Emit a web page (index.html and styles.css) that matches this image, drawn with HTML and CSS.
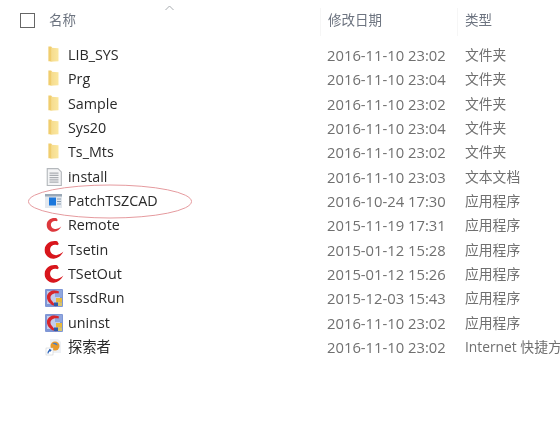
FILE: index.html
```html
<!DOCTYPE html>
<html lang="zh-CN">
<head>
    <meta charset="UTF-8">
    <meta name="viewport" content="width=device-width, initial-scale=1.0">
    <title>文件列表</title>
    <link rel="stylesheet" href="styles.css">
</head>
<body>
    <svg class="icon-defs" width="0" height="0">
        <defs>
            <linearGradient id="folderFill" x1="0" y1="0" x2="1" y2="0">
                <stop offset="0" stop-color="#f4d98a"/>
                <stop offset="1" stop-color="#fbe79f"/>
            </linearGradient>
            <symbol id="folder" viewBox="0 0 16 16">
                <path d="M3 .5h2.500l1 1.500v11.500h-3.500z" fill="#f0cd6e"/>
                <path d="M5.500 1.500l6.500 .5v11.500l-8 .5 1.500-1z" fill="url(#folderFill)"/>
            </symbol>
            <symbol id="textfile" viewBox="0 0 16 16">
                <path d="M2 .5h9.500l3 3v12h-12.500z" fill="#f4f5f6" stroke="#b4b8bc"/>
                <path d="M4 4.500h8M4 6.500h8M4 8.500h8M4 10.500h8M4 12.500h8" stroke="#a9adb2"/>
            </symbol>
            <symbol id="appfile" viewBox="0 0 18 16">
                <rect x="0" y="1" width="17" height="14" fill="#e3e8ee"/>
                <rect x="0" y="1" width="17" height="2.500" fill="#9aa8b6"/>
                <rect x="4" y="4.500" width="7" height="8" fill="#1c78dc"/>
                <path d="M12 6h4M12 8.500h4M12 11h4" stroke="#8ea0b2"/>
            </symbol>
            <symbol id="swirl" viewBox="0 0 18 18">
                <path d="M12 1C7-.5 .8 2.500 .3 8.500 0 13 4 17.500 9 17c3.500-.3 6.800-2.500 8.700-6.500-2.700 2.500-6 4-8.700 3-3-1-4.300-4-3.300-6.500 .8-2 2.800-3.500 6.300-2.500l1.500-1z" fill="#d8161c"/>
            </symbol>
            <symbol id="setup" viewBox="0 0 18 18">
                <rect x="0" y="0" width="18" height="18" rx="1" fill="#7f97d6"/>
                <rect x="2" y="2" width="13" height="13" fill="#c3cdec"/>
                <rect x="10" y="1" width="7" height="7" fill="#8fa6de"/>
                <path d="M14 2.500C9 0 3 2 2 7c-.6 3.500 1.500 6.500 5 9l4.500 1.500-4.500-5.500c-2-2-2-4.500-.5-6 1.500-1.500 4-2 7-1.500z" fill="#d8262c"/>
                <rect x="11" y="9" width="6" height="4.500" fill="#e8b93c"/>
                <rect x="9" y="13.500" width="4" height="3.500" fill="#2f5aa8"/>
                <rect x="13" y="13.500" width="4" height="3.500" fill="#d9c46a"/>
            </symbol>
            <symbol id="shortcut" viewBox="0 0 18 18">
                <path d="M5 1h8l3 3v11h-11z" fill="#eef1f5"/>
                <circle cx="10" cy="8" r="4.500" fill="#e89a2c"/>
                <path d="M7.500 5.500c2-1.500 5-.5 5 2-1.500-1-3.500-1-5-2z" fill="#3f7fd0"/>
                <rect x="1" y="10" width="7" height="7" fill="#fff" stroke="#c4c8cc" stroke-width=".5"/>
                <path d="M3 15.500c0-2 .8-3 2.500-3.200M4.200 11.200l1.800 1-1.400 1.500" fill="none" stroke="#2a62b8" stroke-width="1.100"/>
            </symbol>
        </defs>
    </svg>

    <div class="explorer">
        <div class="list-header">
            <div class="col-name">
                <span class="checkbox"></span>
                <span class="header-label">名称</span>
                <svg class="sort-caret" width="9" height="6" viewBox="0 0 9 6"><path d="M.5 5l4-4 4 4" fill="none" stroke="#a8acb0"/></svg>
            </div>
            <div class="col-date header-label">修改日期</div>
            <div class="col-type header-label">类型</div>
        </div>

        <div class="file-list">
            <div class="file-row">
                <div class="file-name"><svg class="file-icon"><use href="#folder"/></svg>LIB_SYS</div>
                <div class="col-date">2016-11-10 23:02</div>
                <div class="col-type">文件夹</div>
            </div>
            <div class="file-row">
                <div class="file-name"><svg class="file-icon"><use href="#folder"/></svg>Prg</div>
                <div class="col-date">2016-11-10 23:04</div>
                <div class="col-type">文件夹</div>
            </div>
            <div class="file-row">
                <div class="file-name"><svg class="file-icon"><use href="#folder"/></svg>Sample</div>
                <div class="col-date">2016-11-10 23:02</div>
                <div class="col-type">文件夹</div>
            </div>
            <div class="file-row">
                <div class="file-name"><svg class="file-icon"><use href="#folder"/></svg>Sys20</div>
                <div class="col-date">2016-11-10 23:04</div>
                <div class="col-type">文件夹</div>
            </div>
            <div class="file-row">
                <div class="file-name"><svg class="file-icon"><use href="#folder"/></svg>Ts_Mts</div>
                <div class="col-date">2016-11-10 23:02</div>
                <div class="col-type">文件夹</div>
            </div>
            <div class="file-row">
                <div class="file-name"><svg class="file-icon"><use href="#textfile"/></svg>install</div>
                <div class="col-date">2016-11-10 23:03</div>
                <div class="col-type">文本文档</div>
            </div>
            <div class="file-row">
                <div class="file-name"><svg class="file-icon"><use href="#appfile"/></svg>PatchTSZCAD</div>
                <div class="col-date">2016-10-24 17:30</div>
                <div class="col-type">应用程序</div>
            </div>
            <div class="file-row">
                <div class="file-name"><svg class="file-icon faded"><use href="#swirl"/></svg>Remote</div>
                <div class="col-date">2015-11-19 17:31</div>
                <div class="col-type">应用程序</div>
            </div>
            <div class="file-row">
                <div class="file-name"><svg class="file-icon big"><use href="#swirl"/></svg>Tsetin</div>
                <div class="col-date">2015-01-12 15:28</div>
                <div class="col-type">应用程序</div>
            </div>
            <div class="file-row">
                <div class="file-name"><svg class="file-icon big"><use href="#swirl"/></svg>TSetOut</div>
                <div class="col-date">2015-01-12 15:26</div>
                <div class="col-type">应用程序</div>
            </div>
            <div class="file-row">
                <div class="file-name"><svg class="file-icon"><use href="#setup"/></svg>TssdRun</div>
                <div class="col-date">2015-12-03 15:43</div>
                <div class="col-type">应用程序</div>
            </div>
            <div class="file-row">
                <div class="file-name"><svg class="file-icon"><use href="#setup"/></svg>uninst</div>
                <div class="col-date">2016-11-10 23:02</div>
                <div class="col-type">应用程序</div>
            </div>
            <div class="file-row">
                <div class="file-name"><svg class="file-icon"><use href="#shortcut"/></svg>探索者</div>
                <div class="col-date">2016-11-10 23:02</div>
                <div class="col-type">Internet 快捷方式</div>
            </div>
        </div>

        <!-- Hand-drawn highlight round PatchTSZCAD -->
        <svg class="highlight" width="168" height="38" viewBox="0 0 168 38">
            <ellipse cx="84" cy="18.500" rx="81.500" ry="16.500" fill="none" stroke="#e59a9e"/>
        </svg>
    </div>
</body>
</html>
```

FILE: styles.css
```css
* {
    margin: 0;
    padding: 0;
    box-sizing: border-box;
}

html, body {
    height: 100%;
    overflow: hidden;
}

body {
    font-family: "Open Sans", "Noto Sans CJK SC", sans-serif;
    font-size: 14.300px;
    background: #ffffff;
    color: #222;
}

.icon-defs {
    position: absolute;
}

.explorer {
    position: relative;
    width: 560px;
    height: 437px;
    white-space: nowrap;
    overflow: hidden;
    filter: blur(0.35px);
}

.list-header {
    display: flex;
    height: 43px;
    padding-top: 8px;
    line-height: 24px;
}

.col-name {
    width: 320px;
    flex-shrink: 0;
    display: flex;
    align-items: center;
    padding-left: 20px;
    position: relative;
    height: 24px;
}

.checkbox {
    width: 15px;
    height: 15px;
    border: 1.500px solid #666;
    margin-right: 14px;
}

.header-label {
    color: #6d7480;
    font-size: 13.500px;
}

.sort-caret {
    position: absolute;
    left: 165px;
    top: -3px;
}

.col-date {
    width: 138px;
    flex-shrink: 0;
    padding-left: 7px;
    font-size: 14.800px;
    color: #707070;
}

.col-type {
    padding-left: 7px;
    font-size: 13.800px;
    color: #707070;
}

.list-header .col-date,
.list-header .col-type {
    color: #6d7480;
    font-size: 13.500px;
    height: 28px;
}

.list-header .col-date {
    border-left: 1px solid #f6f6f6;
    border-right: 1px solid #f6f6f6;
}

.file-row {
    display: flex;
    height: 24.330px;
    line-height: 24.330px;
}

.file-name {
    width: 320px;
    flex-shrink: 0;
    display: flex;
    align-items: center;
    padding-left: 45px;
    color: #2a2a2a;
}

.file-icon {
    width: 18px;
    height: 18px;
    margin-right: 5px;
    flex-shrink: 0;
}

.faded {
    opacity: 0.85;
    transform: scale(0.85);
}

.big {
    transform: scale(1.080);
}

.highlight {
    position: absolute;
    left: 26px;
    top: 183px;
}
```
